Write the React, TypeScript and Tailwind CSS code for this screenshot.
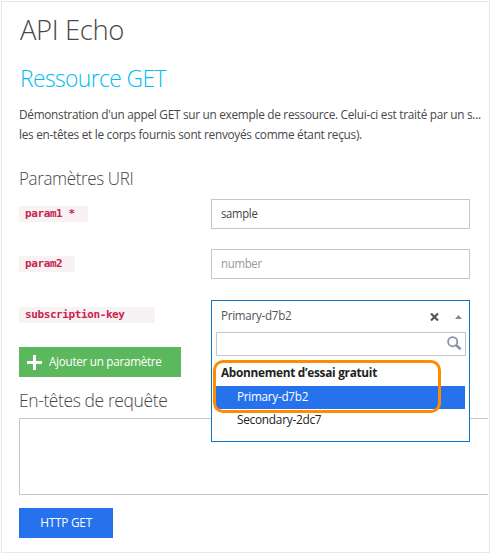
import type { ReactNode } from "react";

function ParamLabel({ children, className }: { children: ReactNode; className: string }) {
  return (
    <code
      className={`block h-4 bg-[#f9f2f4] pl-[6px] text-[11px] leading-[16px] font-bold tracking-[-0.4px] whitespace-pre text-[#c7254e] [font-family:'DejaVu_Sans_Mono',monospace] ${className}`}
    >
      {children}
    </code>
  );
}

function KeyDropdown() {
  return (
    <div className="absolute top-0 left-0 h-[142px] w-[259px] border border-[#0f75c8] bg-white">
      <div className="flex h-[31px] items-center pl-[9px]">
        <span className="w-[209px] origin-left scale-x-[0.93] pb-[2px] leading-[28px] text-[#555]">Primary-d7b2</span>
        <svg width="9" height="8" viewBox="0 0 9 8" className="text-[#555]">
          <path d="M1 .5 8 7.5M8 .5 1 7.5" stroke="currentColor" strokeWidth="2.2" />
        </svg>
        <svg width="7" height="4" viewBox="0 0 7 4" className="ml-[16px]">
          <path d="M0 4 3.5 0 7 4Z" fill="#888" />
        </svg>
      </div>
      <div className="ml-1 flex h-6 w-[250px] items-start justify-end border border-[#c6c6c6] pt-[3px] pr-[3px]">
        <svg width="15" height="15" viewBox="0 0 15 15" fill="none" stroke="#8496a9">
          <circle cx="5.7" cy="5.7" r="4.6" strokeWidth="1.8" />
          <path d="m9 9 4.6 4.3" strokeWidth="2.6" />
        </svg>
      </div>
      <div className="mt-[5px] ml-1 w-[249px] text-[#222]">
        <div className="h-[25px] pl-[5px] leading-[24px] font-bold">
          <span className="inline-block origin-left scale-x-[0.945]">Abonnement d’essai gratuit</span>
        </div>
        <div className="h-[23px] bg-[#2672ec] pl-[21px] leading-[22px] text-white">
          <span className="inline-block origin-left scale-x-[0.94]">Primary-d7b2</span>
        </div>
        <div className="h-[23px] pl-[21px] leading-[22px]">
          <span className="inline-block origin-left scale-x-[0.95]">Secondary-2dc7</span>
        </div>
      </div>
      <div className="absolute top-[59px] left-[1px] h-[53px] w-[228px] rounded-[10px] border-[3px] border-[#ff8c00]" />
    </div>
  );
}

export default function App() {
  return (
    <div className="h-[554px] w-[491px] bg-white pt-px pl-px text-[12.5px] tracking-[-0.3px] text-[#484848] [font-family:'Open_Sans','Noto_Sans',sans-serif]">
      <main className="h-[552px] w-[489px] overflow-hidden border border-[#e8e8e8] pt-[7px] pl-[17px]">
        <h1 className="ml-px origin-left scale-x-[0.98] text-[28px] leading-[40px] font-light tracking-[-0.4px]">API Echo</h1>
        <h2 className="mt-[9px] ml-px origin-left scale-x-[0.95] text-[24px] leading-[40px] font-light tracking-[-0.6px] text-[#00bcf2]">Ressource GET</h2>
        <div className="mt-[7px] w-max origin-left scale-x-[0.945] leading-[20px] whitespace-nowrap">
          <p>Démonstration d'un appel GET sur un exemple de ressource. Celui-ci est traité par un s...</p>
          <p>les en-têtes et le corps fournis sont renvoyés comme étant reçus).</p>
        </div>
        <h3 className="mt-[18px] origin-left scale-x-[0.945] text-[18px] leading-[30px] font-light tracking-[-0.4px]">Paramètres URI</h3>

        <div className="mt-[6px] grid grid-cols-[192px_259px] items-start">
          <ParamLabel className="mt-[7px] w-[69px]">param1 *</ParamLabel>
          <div className="h-[30px] border border-[#c6c6c6] pl-[9px] leading-[27px] text-[#444]">
            <span className="inline-block origin-left scale-x-[0.9]">sample</span>
          </div>
        </div>
        <div className="mt-5 grid grid-cols-[192px_259px] items-start">
          <ParamLabel className="mt-[7px] w-[56px]">param2</ParamLabel>
          <div className="h-[30px] border border-[#c6c6c6] pl-[9px] leading-[27px] text-[#999]">
            <span className="inline-block origin-left scale-x-[0.91]">number</span>
          </div>
        </div>
        <div className="mt-[21px] grid grid-cols-[192px_259px] items-start">
          <ParamLabel className="mt-[7px] w-[136px]">subscription-key</ParamLabel>
          <div className="relative z-10 h-[30px]">
            <KeyDropdown />
          </div>
        </div>

        <button className="mt-[17px] flex h-[30px] w-[162px] items-center bg-[#5cb85c] pl-2 text-white">
          <svg width="15" height="15" viewBox="0 0 15 15">
            <path d="M7.5 0v15M0 7.5h15" stroke="white" strokeWidth="3" />
          </svg>
          <span className="ml-[7px] origin-left scale-x-[0.935] pb-px leading-[26px] whitespace-nowrap">Ajouter un paramètre</span>
        </button>
        <h3 className="mt-[8px] origin-left scale-x-[0.97] text-[18px] leading-[30px] font-light tracking-[-0.4px]">En-têtes de requête</h3>
        <div className="mt-[3px] mr-px h-[77px] border border-r-0 border-[#c6c6c6]" />
        <button className="mt-[13px] h-[30px] w-[94px] bg-[#2672ec] text-center leading-[28px] text-white">
          <span className="inline-block scale-x-[0.95]">HTTP GET</span>
        </button>
      </main>
    </div>
  );
}
